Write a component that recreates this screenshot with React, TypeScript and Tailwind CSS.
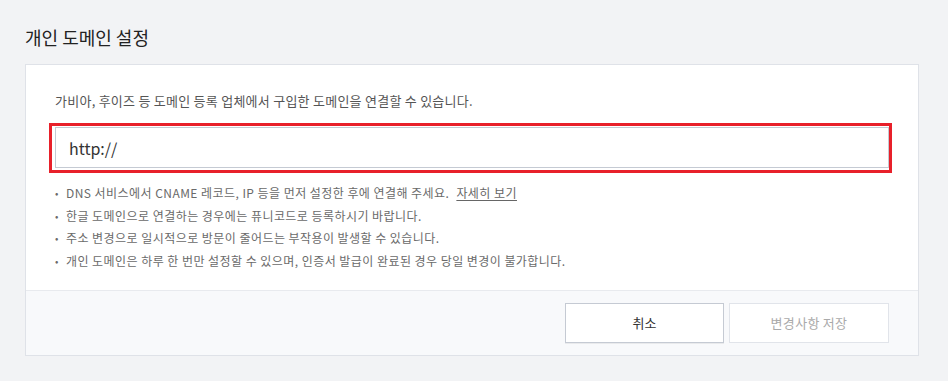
import React from "react";

export default function App() {
  const notes = [
    "한글 도메인으로 연결하는 경우에는 퓨니코드로 등록하시기 바랍니다.",
    "주소 변경으로 일시적으로 방문이 줄어드는 부작용이 발생할 수 있습니다.",
    "개인 도메인은 하루 한 번만 설정할 수 있으며, 인증서 발급이 완료된 경우 당일 변경이 불가합니다.",
  ];
  return (
    <div
      className="min-h-screen w-[948px] bg-[#f2f3f5] pt-[24px] pb-[25px]"
      style={{ fontFamily: '"Noto Sans CJK KR", "Noto Sans", sans-serif' }}
    >
      <h1 className="ml-[25px] h-[26px] text-[18px] leading-[26px] font-normal text-[#222]">
        개인 도메인 설정
      </h1>
      <div className="mt-[14px] ml-[25px] w-[894px] border border-[#dfe2e8] bg-white">
        <div className="px-[29px] pt-[26px] pb-[18px]">
          <p className="text-[13px] leading-[20px] tracking-[0.25px] text-[#555]">
            가비아, 후이즈 등 도메인 등록 업체에서 구입한 도메인을 연결할 수 있습니다.
          </p>
          <div className="relative mt-[16px]">
            <div className="flex h-[41px] w-[834px] items-center border border-[#c5cad3] bg-white px-[13px] text-[16px] text-[#333]">
              http://
            </div>
            <div className="pointer-events-none absolute left-[-6px] top-[-4px] h-[50px] w-[843px] border-[3px] border-[#e8202a]" />
          </div>
          <ul className="mt-[14px] text-[12px] leading-[22.5px] tracking-[0.45px] text-[#6a6a6a]">
            <li className="flex items-start">
              <span className="w-[11px] text-[10px]">•</span>
              <span>
                DNS 서비스에서 CNAME 레코드, IP 등을 먼저 설정한 후에 연결해 주세요.
                <a className="ml-[7px] text-[#666] underline underline-offset-2">자세히 보기</a>
              </span>
            </li>
            {notes.map((n) => (
              <li key={n} className="flex items-start">
                <span className="w-[11px] text-[10px]">•</span>
                <span>{n}</span>
              </li>
            ))}
          </ul>
        </div>
        <div className="flex justify-end gap-[5px] border-t border-[#e8eaee] bg-[#f8f9fb] px-[29px] pt-[12px] pb-[12px]">
          <button className="h-[40px] w-[159px] border border-[#c5cad3] bg-white text-[13px] text-[#333] shadow-[0_1px_0_rgba(0,0,0,0.06)]">
            취소
          </button>
          <button className="h-[40px] w-[160px] border border-[#e1e4ea] bg-white text-[13px] tracking-[0.3px] text-[#aaa]">
            변경사항 저장
          </button>
        </div>
      </div>
    </div>
  );
}
